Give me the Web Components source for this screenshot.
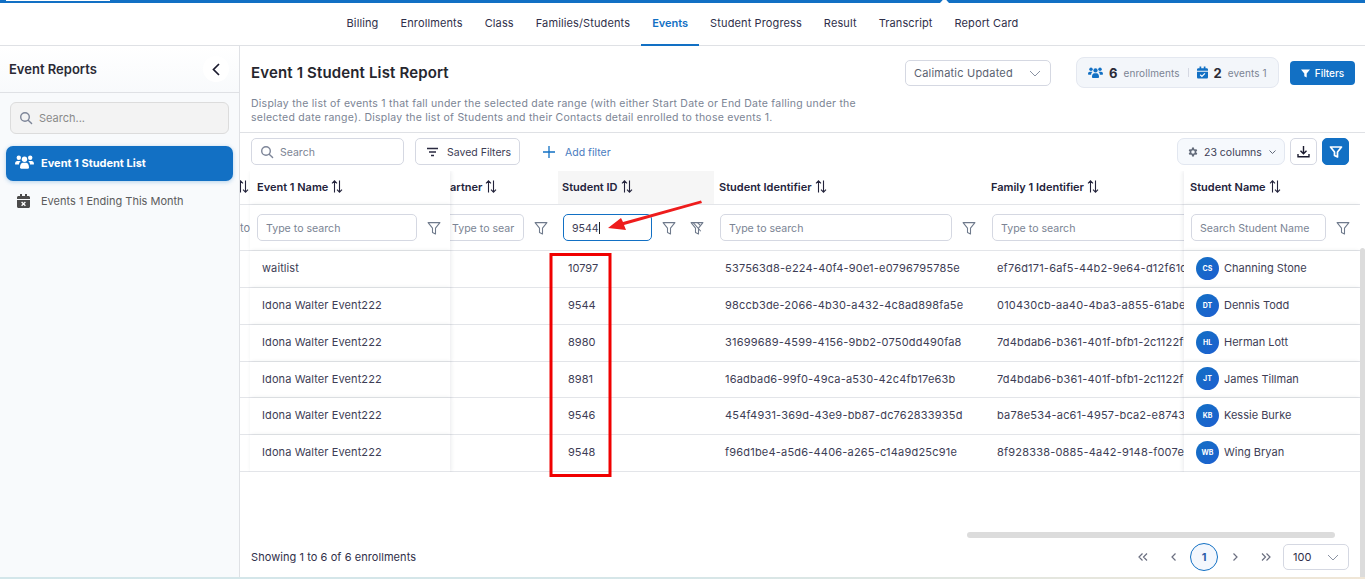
<!DOCTYPE html>
<html>
<head>
<meta charset="utf-8">
<title>Event Reports</title>
<style>
html, body { margin: 0; height: 579px; overflow: hidden; background: #fff; }
body { font: 11px Inter, "Noto Sans", sans-serif; color: #3d3d55; }
</style>
</head>
<body>
<report-app></report-app>
<script>
// icons used by more than one element
const icons = {
  search: '<svg width="14" height="14" viewBox="0 0 14 14" fill="none" stroke="#7d8598" stroke-width="1.4"><circle cx="6" cy="6" r="4.3"/><path d="M9.2 9.2 12.6 12.6" stroke-linecap="round"/></svg>',
  users: '<svg width="19" height="15" viewBox="0 0 19 15" fill="currentColor"><circle cx="3.8" cy="2.8" r="2.2"/><circle cx="15.2" cy="2.8" r="2.2"/><circle cx="9.5" cy="4.3" r="2.7"/><path d="M0 9c0-2 1-3 2.4-3h2.2c.4 0 .8.1 1.1.3C4.6 7 4 8.200 4 9.600H1c-.6 0-1-.2-1-.6zM19 9c0-2-1-3-2.400-3h-2.200c-.4 0-.8.1-1.100.3C14.400 7 15 8.200 15 9.600h3c.6 0 1-.2 1-.6zM5 12.500C5 9.500 6.300 7.800 8 7.800h3c1.700 0 3 1.700 3 4.700 0 .8-.5 1.200-1.200 1.200H6.200C5.500 13.700 5 13.300 5 12.500z"/></svg>',
  calX: '<svg width="13" height="14" viewBox="0 0 13 14"><path fill="#4b4b4b" d="M3 0h2v2h3V0h2v2h1.500C12.300 2 13 2.700 13 3.500V5H0V3.500C0 2.700.7 2 1.500 2H3zM0 6h13v6.500c0 .8-.7 1.500-1.500 1.500h-10C.7 14 0 13.300 0 12.500z"/><path stroke="#fff" stroke-width="1.300" d="M4.600 8l3.800 3.800M8.400 8l-3.800 3.800"/></svg>',
  calCheck: '<svg width="11" height="13" viewBox="0 0 13 14"><path fill="#1270c4" d="M3 0h2v2h3V0h2v2h1.500C12.300 2 13 2.700 13 3.500V5H0V3.500C0 2.700.7 2 1.500 2H3zM0 6h13v6.500c0 .8-.7 1.500-1.500 1.500h-10C.7 14 0 13.300 0 12.500z"/><path stroke="#fff" stroke-width="1.400" fill="none" d="M3.800 9.700l2 2 3.600-3.600"/></svg>',
  chevDown: '<svg width="12" height="7" viewBox="0 0 12 7" fill="none" stroke="#8b93a3" stroke-width="1"><path d="M1 1l5 5 5-5"/></svg>',
  funnel: '<svg width="14" height="14" viewBox="0 0 13 13" fill="none" stroke="#6f7a8c" stroke-width="1"><path d="M1 1.500h11L7.900 6.600v5.400L5.100 10.600v-4z" stroke-linejoin="round"/></svg>',
  funnelOff: '<svg width="14" height="14" viewBox="0 0 13 13" fill="none" stroke="#6f7a8c" stroke-width="1"><path d="M1 1.500h11L7.900 6.600v5.400L5.100 10.600v-4z" stroke-linejoin="round"/><path d="M3 1.500l7 8M7 1.500l3 3"/></svg>',
  sort: '<svg width="12" height="13" viewBox="0 0 12 13" fill="none" stroke="#23233b" stroke-width="1.100"><path d="M3.500 12.500V1M1 3.300 3.500 .8 6 3.300M8.500 .5V12M6 9.700l2.500 2.500L11 9.700"/></svg>'
};

class BaseElement extends HTMLElement {
  connectedCallback() {
    if (this.shadowRoot) return;
    this.attachShadow({ mode: 'open' });
    this.shadowRoot.innerHTML = '<style>' + this.css() + '</style>' + this.html();
  }
}

class ReportApp extends BaseElement {
  css() { return `
    :host { display: flex; flex-direction: column; height: 579px; position: relative; }
    .strip { height: 3px; background: #1270c4; flex: none; position: relative; }
    .strip i { position: absolute; left: 6px; top: 0; width: 104px; height: 1px; background: #fff; }
    .strip b { position: absolute; left: 940px; top: 0; width: 9px; height: 3px; background: #fff; clip-path: polygon(30% 0, 70% 0, 100% 100%, 0 100%); }
    .body { flex: 1; display: flex; min-height: 0; }
    .foot { height: 2px; flex: none; background: linear-gradient(90deg, #d3e6ea, #d6e6e8 50%, #f0e6d6); }
  `; }
  html() { return `
    <div class="strip"><i></i><b></b></div>
    <top-nav></top-nav>
    <div class="body">
      <report-sidebar></report-sidebar>
      <report-main></report-main>
    </div>
    <div class="foot"></div>
  `; }
}

class TopNav extends BaseElement {
  css() { return `
    :host { display: flex; justify-content: center; height: 43px; flex: none; box-sizing: border-box; border-bottom: 1px solid #dfe1e5; color: #2f2f4a; letter-spacing: .12px; }
    a { display: flex; align-items: center; box-sizing: border-box; height: 42px; padding: 0 11px 2px; white-space: nowrap; }
    a.on { color: #1270c4; font-weight: 600; letter-spacing: 0; border-bottom: 2px solid #1270c4; height: 43px; padding-bottom: 1px; }
  `; }
  html() {
    const items = ['Billing', 'Enrollments', 'Class', 'Families/Students', 'Events', 'Student Progress', 'Result', 'Transcript', 'Report Card'];
    return items.map(t => `<a class="${t == 'Events' ? 'on' : ''}">${t}</a>`).join('');
  }
}

class ReportSidebar extends BaseElement {
  css() { return `
    :host { display: flex; flex-direction: column; width: 240px; flex: none; box-sizing: border-box; background: #f8fafc; border-right: 1px solid #dfe1e5; }
    .head { height: 47px; box-sizing: border-box; border-bottom: 1px solid #dfe1e5; background: linear-gradient(#fff, #f8fafc); display: flex; align-items: center; justify-content: space-between; padding: 0 10px 0 9px; font-size: 13px; font-weight: 600; color: #2a2a35; }
    .back { width: 26px; height: 26px; border-radius: 50%; background: #fff; display: flex; align-items: center; justify-content: center; }
    .search { margin: 9px 10px 0; height: 32px; box-sizing: border-box; background: #f3f3f3; border: 1px solid #dcdcdc; border-radius: 6px; display: flex; align-items: center; gap: 6px; padding: 0 8px; color: #8a8a8a; }
    .item { display: flex; align-items: center; gap: 7px; height: 35px; margin: 12px 6px 0; padding: 0 9px 2px; border-radius: 7px; color: #5c5c5c; box-sizing: border-box; }
    .item.on { background: #1270c4; color: #fff; font-weight: 700; box-shadow: 0 1px 4px rgba(18,112,196,.3); }
    .item + .item { margin-top: 3px; padding-left: 11px; gap: 11px; }
  `; }
  html() { return `
    <div class="head">Event Reports<span class="back"><svg width="8" height="13" viewBox="0 0 8 13" fill="none" stroke="#1a1a2e" stroke-width="1.700"><path d="M7 1 1.500 6.500 7 12"/></svg></span></div>
    <div class="search">${icons.search}<span>Search...</span></div>
    <div class="item on">${icons.users}<span>Event 1 Student List</span></div>
    <div class="item">${icons.calX}<span>Events 1 Ending This Month</span></div>
  `; }
}

class ReportMain extends BaseElement {
  css() { return `
    :host { display: flex; flex-direction: column; flex: 1; min-width: 0; position: relative; }
    .vbar { position: absolute; right: 0; top: 202px; bottom: 0; width: 5px; background: #dcdcdc; border-radius: 3px 3px 0 0; }
    .hbar { position: absolute; left: 727px; top: 486px; width: 368px; height: 6px; background: #dcdcdc; border-radius: 3px; }
    svg.mark { position: absolute; left: 0; top: 0; pointer-events: none; }
  `; }
  html() { return `
    <report-header></report-header>
    <table-toolbar></table-toolbar>
    <report-table></report-table>
    <table-pager></table-pager>
    <div class="vbar"></div>
    <div class="hbar"></div>
    <svg class="mark" width="1125" height="531" viewBox="240 46 1125 531">
      <rect x="551" y="254.500" width="59" height="221" fill="none" stroke="#f00000" stroke-width="3"/>
      <path fill="#ee1c1c" d="M701 200.500 702 203 624 225 626 230 608 228 621 218 623 222z"/>
    </svg>
  `; }
}

class ReportHeader extends BaseElement {
  css() { return `
    :host { display: flex; height: 87px; flex: none; box-sizing: border-box; border-bottom: 1px solid #dfe1e5; padding: 11px 10px 0 11px; justify-content: space-between; }
    h1 { margin: 5px 0 0; font-size: 15px; font-weight: 600; color: #26262e; line-height: 22px; letter-spacing: .15px; }
    p { margin: 13px 0 0; width: 615px; font-size: 10.500px; line-height: 14px; color: #7b8494; letter-spacing: .24px; }
    .right { display: flex; align-items: flex-start; }
    .select { width: 146px; height: 26px; margin-top: 3px; box-sizing: border-box; border: 1px solid #d5d8e2; border-radius: 5px; display: flex; align-items: center; justify-content: space-between; padding: 0 9px 0 8px; color: #5a6270; letter-spacing: .2px; }
    .pill { margin-left: 25px; width: 203px; height: 31px; box-sizing: border-box; border: 1px solid #e4e8f0; border-radius: 8px; background: #f3f6fa; display: flex; align-items: center; padding: 0 0 0 11px; color: #7b8494; font-size: 10px; letter-spacing: .08px; }
    .pill b { font-size: 13px; color: #2b2b35; margin: 0 6px 0 6px; font-weight: 700; }
    .pill svg { color: #1270c4; }
    .pill u { width: 1px; height: 9px; background: #d5d8e2; margin: 0 8px; }
    .btn { margin: 4px 0 0 11px; width: 65px; height: 24px; background: #1270c4; color: #fff; border-radius: 4px; display: flex; align-items: center; justify-content: center; gap: 5px; font-size: 10px; font-weight: 500; }
  `; }
  html() { return `
    <div>
      <h1>Event 1 Student List Report</h1>
      <p>Display the list of events 1 that fall under the selected date range (with either Start Date or End Date falling under the selected date range). Display the list of Students and their Contacts detail enrolled to those events 1.</p>
    </div>
    <div class="right">
      <div class="select"><span>Calimatic Updated</span>${icons.chevDown}</div>
      <div class="pill">${icons.users.replace('width="19" height="15"', 'width="15" height="12"')}<b>6</b>enrollments<u></u>${icons.calCheck}<b>2</b>events 1</div>
      <div class="btn"><svg width="9" height="9" viewBox="0 0 9 9" fill="#fff"><path d="M0 .5h9L5.700 4.600V8.500L3.300 7.200V4.600z"/></svg>Filters</div>
    </div>
  `; }
}

class TableToolbar extends BaseElement {
  css() { return `
    :host { display: flex; align-items: center; height: 38px; flex: none; box-sizing: border-box; padding: 5px 16px 6px 11px; color: #3d3d55; font-size: 10.500px; }
    .box { height: 27px; box-sizing: border-box; border: 1px solid #d5d8e2; border-radius: 5px; display: flex; align-items: center; }
    .box span, .add span { padding-top: 1px; }
    .search { width: 153px; padding: 0 8px; gap: 6px; color: #7b8494; }
    .saved { width: 105px; margin-left: 11px; padding-left: 10px; gap: 8px; }
    .add { display: flex; align-items: center; gap: 10px; margin-left: 23px; color: #4a7cc0; }
    .gap { flex: 1; }
    .cols { width: 108px; background: #f6f9fd; border-color: #e2e7f0; justify-content: space-between; padding: 0 8px 0 9px; border-radius: 7px; }
    .cols span { display: flex; align-items: center; gap: 5px; }
    .dl { width: 27px; margin-left: 5px; justify-content: center; }
    .fl { width: 27px; margin-left: 5px; justify-content: center; background: #1270c4; border-color: #1270c4; }
  `; }
  html() { return `
    <div class="box search">${icons.search}<span>Search</span></div>
    <div class="box saved"><svg width="13" height="10" viewBox="0 0 13 10" stroke="#2a2a40" stroke-width="1.300"><path d="M1 1.500h11M3 5h7M5 8.500h3"/></svg><span>Saved Filters</span></div>
    <div class="add"><svg width="12" height="12" viewBox="0 0 12 12" stroke="#1270c4" stroke-width="1.300"><path d="M6 0v12M0 6h12"/></svg><span>Add filter</span></div>
    <div class="gap"></div>
    <div class="box cols"><span><svg width="12" height="12" viewBox="0 0 24 24" fill="#636b7a"><path d="M19.400 13a7.600 7.600 0 0 0 0-2l2.100-1.600-2-3.500-2.500 1a7.500 7.500 0 0 0-1.700-1L15 3.200h-4l-.4 2.700a7.500 7.500 0 0 0-1.700 1l-2.500-1-2 3.500L6.500 11a7.600 7.600 0 0 0 0 2l-2.100 1.600 2 3.500 2.500-1a7.500 7.500 0 0 0 1.700 1l.4 2.700h4l.4-2.700a7.500 7.500 0 0 0 1.700-1l2.500 1 2-3.500zM13 15.500a3.500 3.500 0 1 1 0-7 3.500 3.500 0 0 1 0 7z" transform="translate(-1)"/></svg>23 columns</span><svg width="7" height="4" viewBox="0 0 7 4" fill="none" stroke="#636b7a"><path d="M.5.500l3 3 3-3"/></svg></div>
    <div class="box dl"><svg width="13" height="13" viewBox="0 0 13 13" fill="none" stroke="#1a1a2e" stroke-width="1.400"><path d="M6.500 1v7.500M3.500 5.800l3 3 3-3M1 9v2.700h11V9"/></svg></div>
    <div class="box fl"><svg width="14" height="14" viewBox="0 0 14 14" fill="none" stroke="#fff" stroke-width="1.700"><path d="M1.500 2h11L8.500 7v5l-3-1.500V7z" stroke-linejoin="round"/></svg></div>
  `; }
}

class ReportTable extends BaseElement {
  css() { return `
    :host { display: block; flex: none; margin-right: 5px; height: 301px; overflow: hidden; }
    .grid { display: grid; grid-template-columns: 10px 200px 108px 156px 272px 198px 176px; grid-template-rows: 34px 46px 37px 37px 37px 36px 37px 37px; }
    .c { box-sizing: border-box; border-bottom: 1px solid #e3e5e9; display: flex; align-items: center; overflow: hidden; white-space: nowrap; padding: 0 0 2px 11px; background: #fff; }
    .h { font-weight: 600; color: #23233b; gap: 3px; padding-left: 5px; }
    .h svg { flex: none; }
    .sl { box-shadow: 1px 0 4px rgba(40,50,70,.1); position: relative; z-index: 1; padding-left: 12px; }
    .sr { box-shadow: -1px 0 4px rgba(40,50,70,.1); position: relative; z-index: 1; padding-left: 12px; }
    .h.sl { padding-left: 7px; }
    .h.sr { padding-left: 6px; }
    .f { gap: 10px; padding: 0 0 0 6px; }
    .f.sl { padding-left: 7px; }
    .f.sr { padding-left: 7px; }
    .hl { background: #f6f6f6; padding-left: 4px; }
    .inp { height: 27px; box-sizing: border-box; border: 1px solid #d5d8e2; border-radius: 5px; padding: 1px 8px 0; display: flex; align-items: center; color: #7b8494; flex: none; overflow: hidden; font-size: 10.600px; }
    .focus { border-color: #1270c4; color: #3d3d55; }
    .focus i { width: 1px; height: 12px; background: #222; }
    .av { width: 23px; height: 23px; border-radius: 50%; background: linear-gradient(135deg, #1270c4, #1e5fd0); color: #fff; font-size: 7px; font-weight: 700; display: flex; align-items: center; justify-content: center; margin-right: 5px; flex: none; }
    .id { letter-spacing: .2px; }
    .ev { letter-spacing: .1px; }
  `; }
  html() {
    const rows = [
      ['waitlist', '10797', '537563d8-e224-40f4-90e1-e0796795785e', 'ef76d171-6af5-44b2-9e64-d12f61d', 'CS', 'Channing Stone'],
      ['Idona Walter Event222', '9544', '98ccb3de-2066-4b30-a432-4c8ad898fa5e', '010430cb-aa40-4ba3-a855-61abe', 'DT', 'Dennis Todd'],
      ['Idona Walter Event222', '8980', '31699689-4599-4156-9bb2-0750dd490fa8', '7d4bdab6-b361-401f-bfb1-2c1122f1', 'HL', 'Herman Lott'],
      ['Idona Walter Event222', '8981', '16adbad6-99f0-49ca-a530-42c4fb17e63b', '7d4bdab6-b361-401f-bfb1-2c1122f1', 'JT', 'James Tillman'],
      ['Idona Walter Event222', '9546', '454f4931-369d-43e9-bb87-dc762833935d', 'ba78e534-ac61-4957-bca2-e87436', 'KB', 'Kessie Burke'],
      ['Idona Walter Event222', '9548', 'f96d1be4-a5d6-4406-a265-c14a9d25c91e', '8f928338-0885-4a42-9148-f007e', 'WB', 'Wing Bryan']
    ];
    const head = `
      <div class="c h" style="padding-left:0"><span style="margin-left:-3px;display:flex">${icons.sort}</span></div>
      <div class="c h sl">Event 1 Name ${icons.sort}</div>
      <div class="c h" style="padding-left:0"><span>artner</span>${icons.sort}</div>
      <div class="c h hl">Student ID ${icons.sort}</div>
      <div class="c h">Student Identifier ${icons.sort}</div>
      <div class="c h">Family 1 Identifier ${icons.sort}</div>
      <div class="c h sr">Student Name ${icons.sort}</div>`;
    const filters = `
      <div class="c" style="color:#7b8494;padding:0">to</div>
      <div class="c f sl"><div class="inp" style="width:160px">Type to search</div>${icons.funnel}</div>
      <div class="c f" style="padding-left:0"><div class="inp" style="width:74px;border-left:0;border-radius:0 5px 5px 0;padding-left:2px;white-space:nowrap">Type to sear</div>${icons.funnel}</div>
      <div class="c f" style="padding-left:5px"><div class="inp focus" style="width:89px">9544<i></i></div>${icons.funnel}<span style="margin-left:4px;display:flex">${icons.funnelOff}</span></div>
      <div class="c f"><div class="inp" style="width:232px">Type to search</div>${icons.funnel}</div>
      <div class="c f"><div class="inp" style="width:220px">Type to search</div></div>
      <div class="c f sr"><div class="inp" style="width:135px">Search Student Name</div>${icons.funnel}</div>`;
    const body = rows.map(r => `
      <div class="c"></div>
      <div class="c sl ev">${r[0]}</div>
      <div class="c"></div>
      <div class="c" style="padding-left:10px">${r[1]}</div>
      <div class="c id">${r[2]}</div>
      <div class="c id">${r[3]}</div>
      <div class="c sr"><span class="av">${r[4]}</span>${r[5]}</div>`).join('');
    return `<div class="grid">${head}${filters}${body}</div>`;
  }
}

class TablePager extends BaseElement {
  css() { return `
    :host { display: flex; flex: 1; align-items: center; justify-content: space-between; padding: 65px 16px 0 11px; box-sizing: border-box; color: #30304a; }
    .pages { display: flex; align-items: center; }
    .p { width: 31px; display: flex; justify-content: center; }
    .cur { width: 28px; height: 28px; margin: 0 1px; box-sizing: border-box; border: 1px solid #1270c4; border-radius: 50%; background: #f3f7fd; color: #2f5fa8; font-weight: 700; display: flex; align-items: center; justify-content: center; }
    .size { width: 66px; height: 26px; margin-left: 2px; box-sizing: border-box; border: 1px solid #d5d8e2; border-radius: 5px; display: flex; align-items: center; justify-content: space-between; padding: 0 9px; }
    .sum { letter-spacing: .07px; }
  `; }
  html() {
    const a = d => `<svg width="10" height="8" viewBox="0 0 10 8" fill="none" stroke="#6b6f80" stroke-width="1.200"><path d="${d}"/></svg>`;
    return `
      <div class="sum">Showing 1 to 6 of 6 enrollments</div>
      <div class="pages">
        <span class="p">${a('M4.500.5 1 4l3.500 3.500M9 .5 5.500 4 9 7.500')}</span>
        <span class="p">${a('M6.500.5 3 4l3.500 3.500')}</span>
        <span class="cur">1</span>
        <span class="p">${a('M3.500.5 7 4 3.500 7.500')}</span>
        <span class="p">${a('M1 .5 4.500 4 1 7.500M5.500.5 9 4 5.500 7.500')}</span>
        <div class="size"><span>100</span>${icons.chevDown}</div>
      </div>`;
  }
}

customElements.define('report-app', ReportApp);
customElements.define('top-nav', TopNav);
customElements.define('report-sidebar', ReportSidebar);
customElements.define('report-main', ReportMain);
customElements.define('report-header', ReportHeader);
customElements.define('table-toolbar', TableToolbar);
customElements.define('report-table', ReportTable);
customElements.define('table-pager', TablePager);
</script>
</body>
</html>
